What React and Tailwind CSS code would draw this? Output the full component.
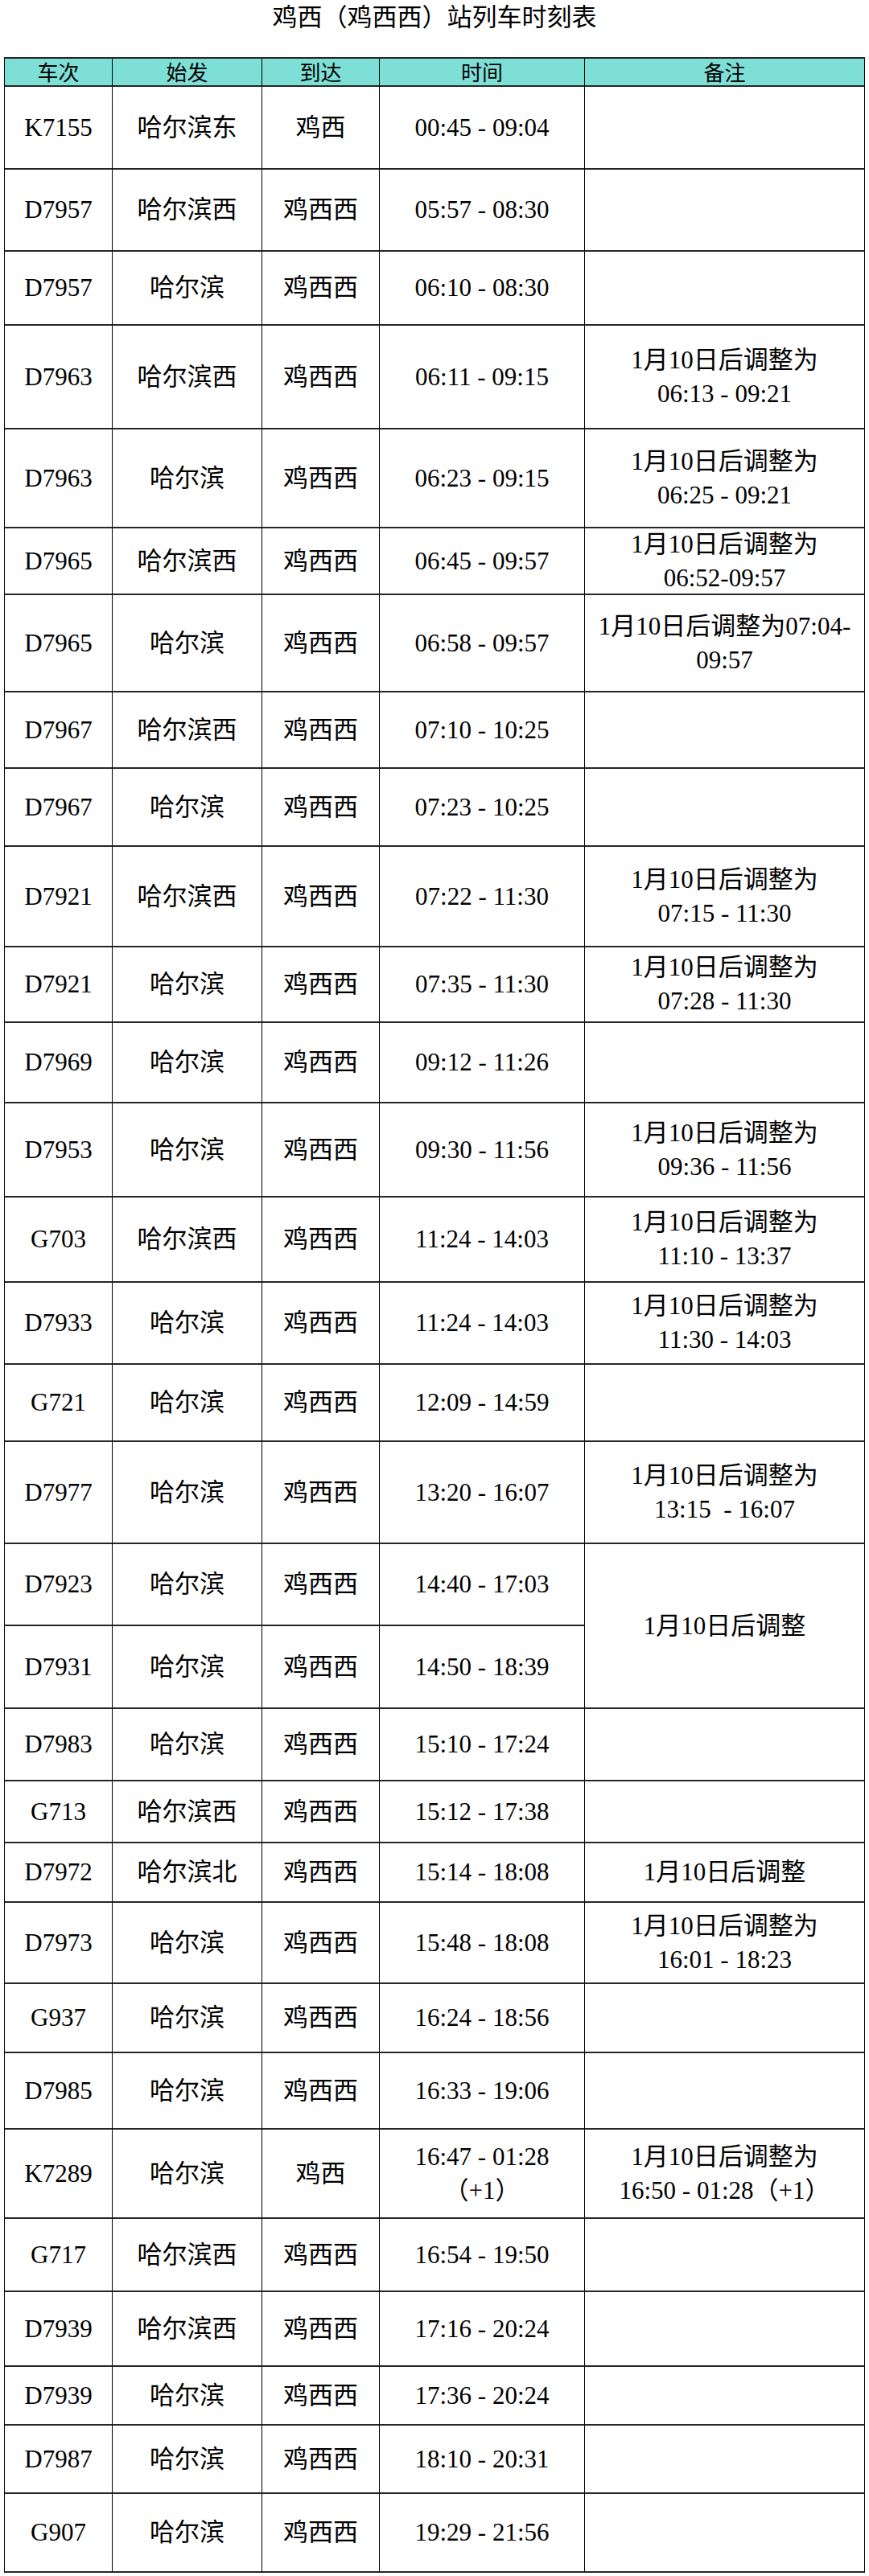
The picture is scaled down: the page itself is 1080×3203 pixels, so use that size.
const rows = [
  { h: "h-[103px]", no: "K7155", from: "哈尔滨东", to: "鸡西", time: ["00:45 - 09:04"], note: [] },
  { h: "h-[102px]", no: "D7957", from: "哈尔滨西", to: "鸡西西", time: ["05:57 - 08:30"], note: [] },
  { h: "h-[92px]", no: "D7957", from: "哈尔滨", to: "鸡西西", time: ["06:10 - 08:30"], note: [] },
  { h: "h-[129px]", no: "D7963", from: "哈尔滨西", to: "鸡西西", time: ["06:11 - 09:15"], note: ["1月10日后调整为", "06:13 - 09:21"] },
  { h: "h-[123px]", no: "D7963", from: "哈尔滨", to: "鸡西西", time: ["06:23 - 09:15"], note: ["1月10日后调整为", "06:25 - 09:21"] },
  { h: "h-[83px]", no: "D7965", from: "哈尔滨西", to: "鸡西西", time: ["06:45 - 09:57"], note: ["1月10日后调整为", "06:52-09:57"] },
  { h: "h-[121px]", no: "D7965", from: "哈尔滨", to: "鸡西西", time: ["06:58 - 09:57"], note: ["1月10日后调整为07:04-", "09:57"] },
  { h: "h-[95px]", no: "D7967", from: "哈尔滨西", to: "鸡西西", time: ["07:10 - 10:25"], note: [] },
  { h: "h-[97px]", no: "D7967", from: "哈尔滨", to: "鸡西西", time: ["07:23 - 10:25"], note: [] },
  { h: "h-[125px]", no: "D7921", from: "哈尔滨西", to: "鸡西西", time: ["07:22 - 11:30"], note: ["1月10日后调整为", "07:15 - 11:30"] },
  { h: "h-[94px]", no: "D7921", from: "哈尔滨", to: "鸡西西", time: ["07:35 - 11:30"], note: ["1月10日后调整为", "07:28 - 11:30"] },
  { h: "h-[100px]", no: "D7969", from: "哈尔滨", to: "鸡西西", time: ["09:12 - 11:26"], note: [] },
  { h: "h-[117px]", no: "D7953", from: "哈尔滨", to: "鸡西西", time: ["09:30 - 11:56"], note: ["1月10日后调整为", "09:36 - 11:56"] },
  { h: "h-[106px]", no: "G703", from: "哈尔滨西", to: "鸡西西", time: ["11:24 - 14:03"], note: ["1月10日后调整为", "11:10 - 13:37"] },
  { h: "h-[102px]", no: "D7933", from: "哈尔滨", to: "鸡西西", time: ["11:24 - 14:03"], note: ["1月10日后调整为", "11:30 - 14:03"] },
  { h: "h-[96px]", no: "G721", from: "哈尔滨", to: "鸡西西", time: ["12:09 - 14:59"], note: [] },
  { h: "h-[127px]", no: "D7977", from: "哈尔滨", to: "鸡西西", time: ["13:20 - 16:07"], note: ["1月10日后调整为", "13:15\u00a0\u00a0- 16:07"] },
  { h: "h-[102px]", no: "D7923", from: "哈尔滨", to: "鸡西西", time: ["14:40 - 17:03"], note: ["1月10日后调整"], span: true },
  { h: "h-[103px]", no: "D7931", from: "哈尔滨", to: "鸡西西", time: ["14:50 - 18:39"], skipNote: true },
  { h: "h-[90px]", no: "D7983", from: "哈尔滨", to: "鸡西西", time: ["15:10 - 17:24"], note: [] },
  { h: "h-[77px]", no: "G713", from: "哈尔滨西", to: "鸡西西", time: ["15:12 - 17:38"], note: [] },
  { h: "h-[74px]", no: "D7972", from: "哈尔滨北", to: "鸡西西", time: ["15:14 - 18:08"], note: ["1月10日后调整"] },
  { h: "h-[101px]", no: "D7973", from: "哈尔滨", to: "鸡西西", time: ["15:48 - 18:08"], note: ["1月10日后调整为", "16:01 - 18:23"] },
  { h: "h-[86px]", no: "G937", from: "哈尔滨", to: "鸡西西", time: ["16:24 - 18:56"], note: [] },
  { h: "h-[95px]", no: "D7985", from: "哈尔滨", to: "鸡西西", time: ["16:33 - 19:06"], note: [] },
  { h: "h-[111px]", no: "K7289", from: "哈尔滨", to: "鸡西", time: ["16:47 - 01:28", "（+1）"], note: ["1月10日后调整为", "16:50 - 01:28（+1）"] },
  { h: "h-[91px]", no: "G717", from: "哈尔滨西", to: "鸡西西", time: ["16:54 - 19:50"], note: [] },
  { h: "h-[93px]", no: "D7939", from: "哈尔滨西", to: "鸡西西", time: ["17:16 - 20:24"], note: [] },
  { h: "h-[73px]", no: "D7939", from: "哈尔滨", to: "鸡西西", time: ["17:36 - 20:24"], note: [] },
  { h: "h-[85px]", no: "D7987", from: "哈尔滨", to: "鸡西西", time: ["18:10 - 20:31"], note: [] },
  { h: "h-[98px]", no: "G907", from: "哈尔滨", to: "鸡西西", time: ["19:29 - 21:56"], note: [] },
];

const cellBase =
  "flex flex-col items-center justify-center text-center border-r border-r-black border-b-2 border-b-[#262626] text-[31px] leading-[42px] text-black whitespace-nowrap";

function Cell({ h, lines, extra = "" }) {
  return (
    <div className={`${cellBase} ${h} ${extra}`}>
      {lines.map((l, i) => (
        <div key={i}>{l}</div>
      ))}
    </div>
  );
}

export default function App() {
  const headers = ["车次", "始发", "到达", "时间", "备注"];
  return (
    <div className="w-[1080px] bg-white font-[family-name:'Liberation_Serif','Noto_Sans_CJK_SC',serif] text-black">
      <div className="h-[71px] pt-[5px] text-center text-[31px] leading-[34px]">
        鸡西（鸡西西）站列车时刻表
      </div>
      <div className="ml-[5px] w-[1070px] grid grid-cols-[134px_186px_146px_255px_348px] border-l border-l-black border-t-2 border-t-[#262626]">
        {headers.map((t) => (
          <div
            key={t}
            className="h-[35px] flex items-center justify-center pt-[4px] bg-[#7edfd7] border-r border-r-black border-b-2 border-b-[#262626] text-[26px] leading-none"
          >
            {t}
          </div>
        ))}
        {rows.map((r, i) => (
          <div key={i} className="contents">
            <Cell h={r.h} lines={[r.no]} />
            <Cell h={r.h} lines={[r.from]} />
            <Cell h={r.h} lines={[r.to]} />
            <Cell h={r.h} lines={r.time} />
            {!r.skipNote &&
              (r.span ? (
                <Cell h="" lines={r.note} extra="row-span-2" />
              ) : (
                <Cell h={r.h} lines={r.note} />
              ))}
          </div>
        ))}
      </div>
    </div>
  );
}
